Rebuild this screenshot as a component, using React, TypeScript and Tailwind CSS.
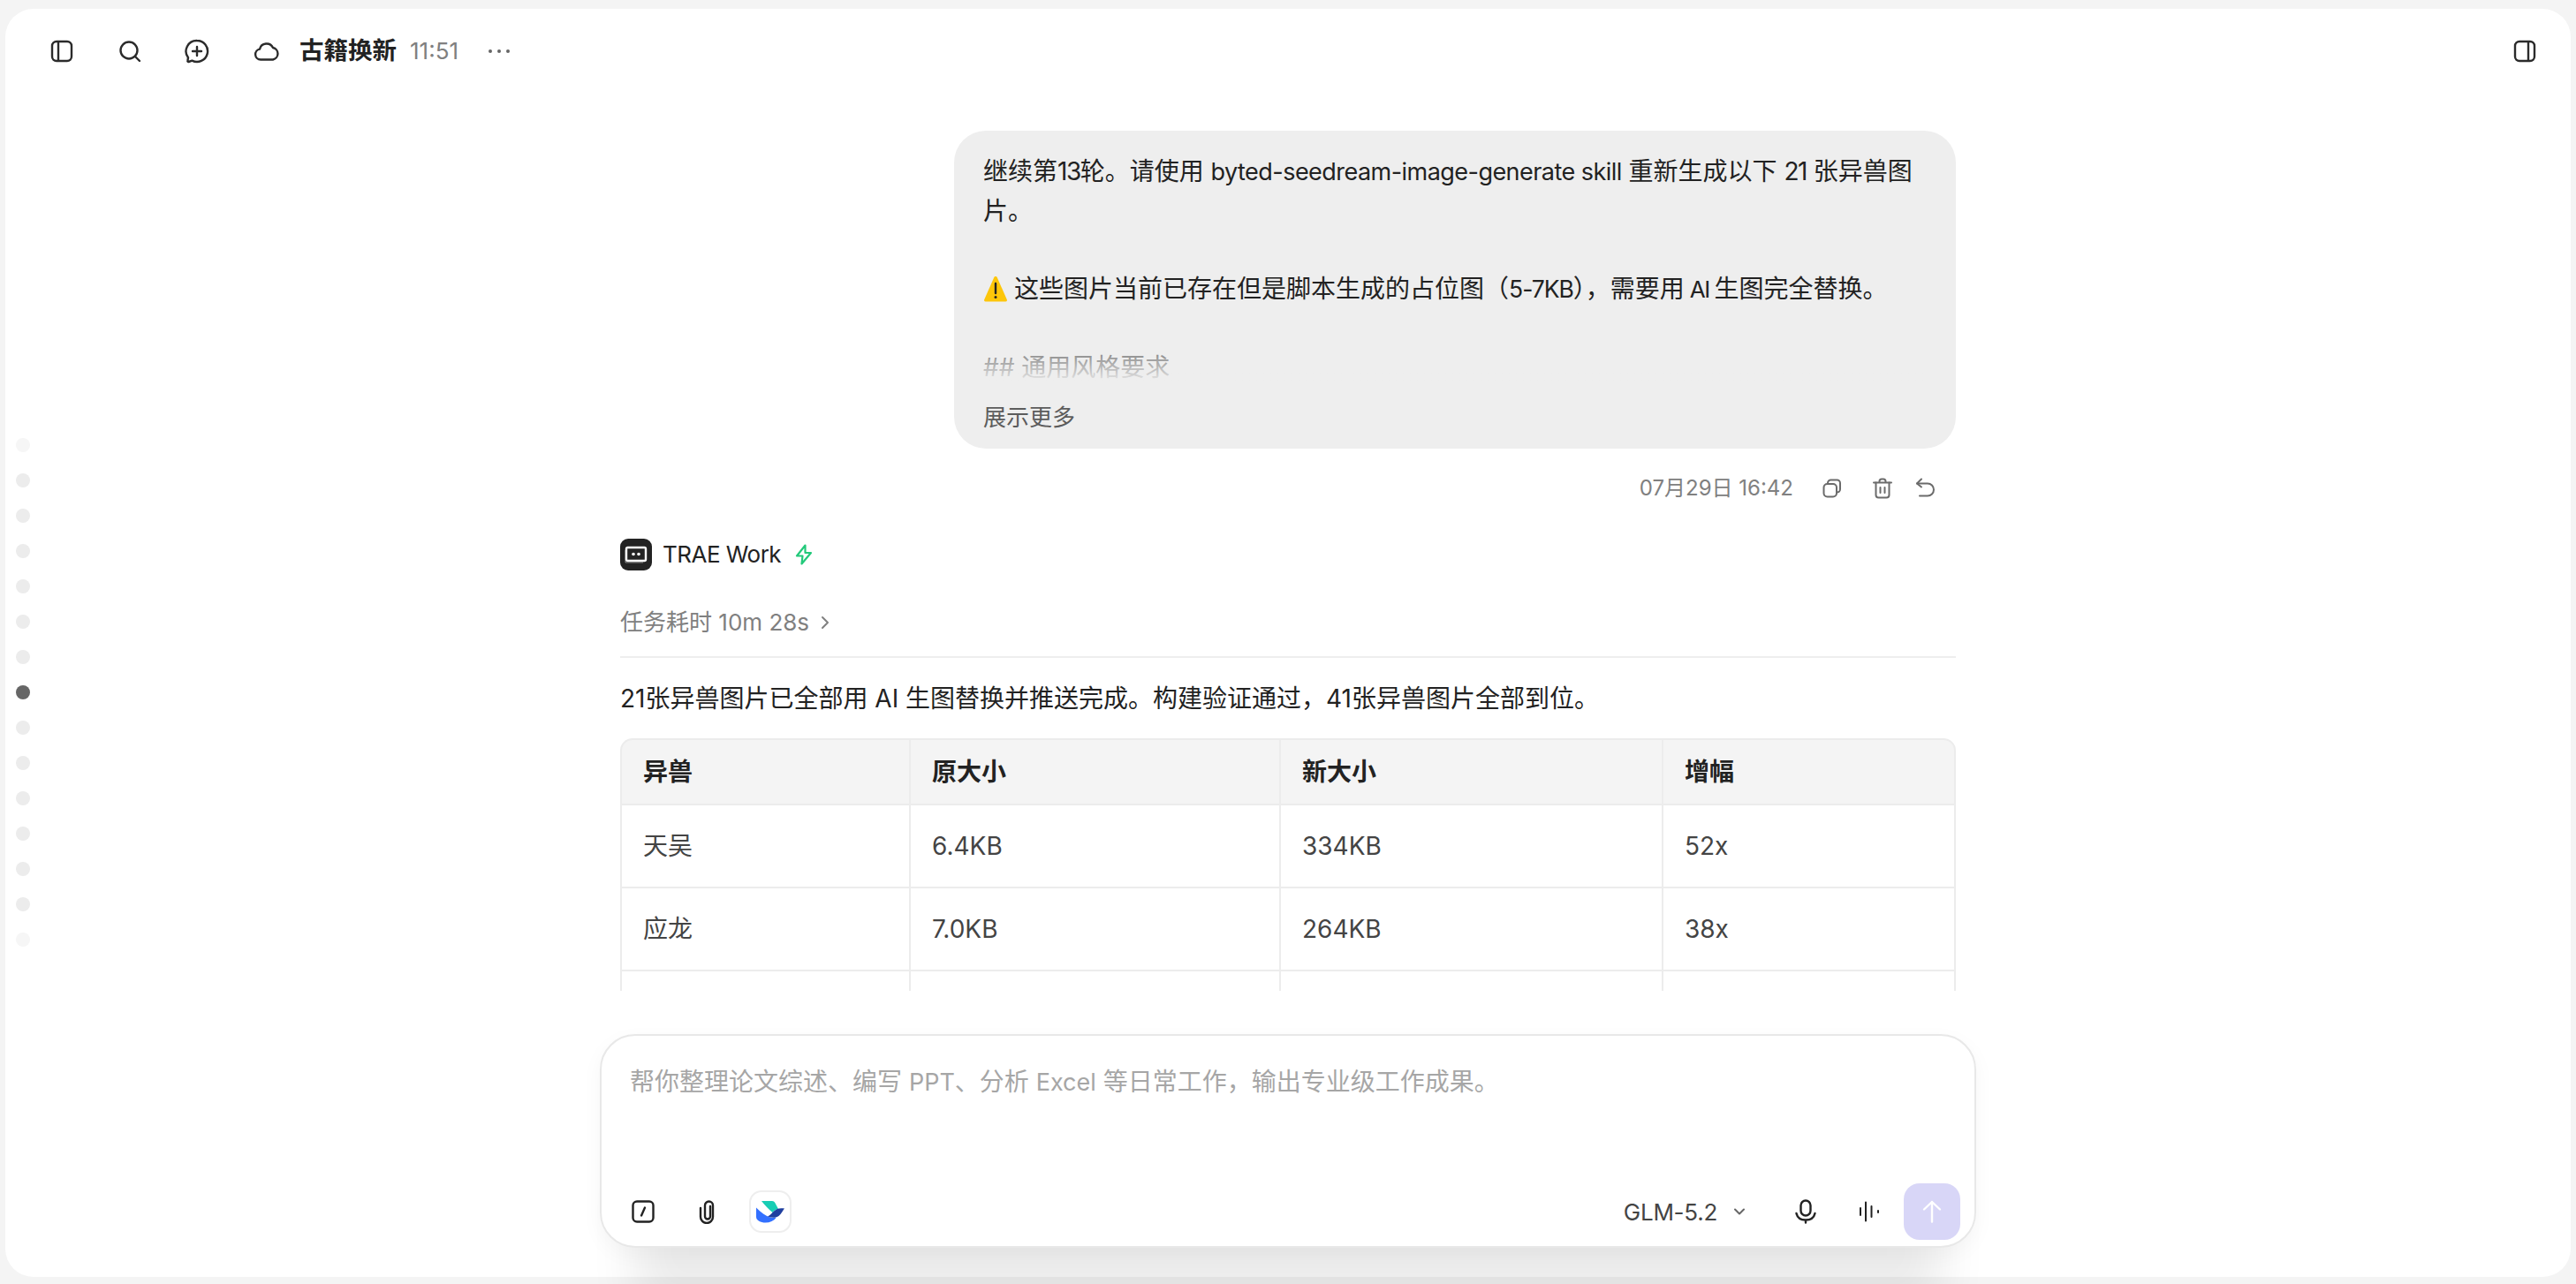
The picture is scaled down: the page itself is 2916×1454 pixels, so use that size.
import React from 'react';
import { ChevronDown, ChevronRight } from 'lucide-react';

const FONT = "font-['Inter','Noto_Sans_CJK_SC',sans-serif]";

const columns = [
  { label: '异兽', width: 'w-[327px]' },
  { label: '原大小', width: 'w-[419px]' },
  { label: '新大小', width: 'w-[433px]' },
  { label: '增幅', width: 'w-[333px]' },
];

const rows = [
  ['天吴', '6.4KB', '334KB', '52x'],
  ['应龙', '7.0KB', '264KB', '38x'],
  ['\u00a0', '', '', ''],
];

function SidebarIcon({ side }: { side: 'left' | 'right' }) {
  return (
    <svg width="26" height="26" viewBox="0 0 26 26" fill="none" stroke="#2b2b2b" strokeWidth="2.4">
      <rect x="2" y="2" width="22" height="22" rx="5" />
      <path d={side === 'left' ? 'M9 2v22' : 'M17 2v22'} />
    </svg>
  );
}

function SearchIcon() {
  return (
    <svg width="26" height="26" viewBox="0 0 26 26" fill="none" stroke="#2b2b2b" strokeWidth="2.4" strokeLinecap="round">
      <circle cx="12" cy="12" r="9.5" />
      <path d="M19 19l5 5" />
    </svg>
  );
}

function ChatPlusIcon() {
  return (
    <svg width="28" height="28" viewBox="0 0 28 28" fill="none" stroke="#2b2b2b" strokeWidth="2.4" strokeLinecap="round" strokeLinejoin="round">
      <path d="M14 2a12 12 0 1 1-5.6 22.6L4.6 26c-.8.2-1.4-.4-1.2-1.2l.6-3.6A12 12 0 0 1 14 2z" />
      <path d="M14 9v10M9 14h10" />
    </svg>
  );
}

function CloudIcon() {
  return (
    <svg width="30" height="24" viewBox="0 0 30 24" fill="none" stroke="#2b2b2b" strokeWidth="2.4" strokeLinejoin="round">
      <path d="M8 21.5a6 6 0 0 1-1-11.9A8 8 0 0 1 22 8a6.9 6.9 0 0 1 0 13.5z" />
    </svg>
  );
}

function CopyIcon() {
  return (
    <svg width="22" height="22" viewBox="0 0 22 22" fill="none" stroke="#6b6b6b" strokeWidth="2" strokeLinejoin="round">
      <rect x="1.5" y="6" width="14.5" height="14.5" rx="4" />
      <path d="M6 6V5a3.5 3.5 0 0 1 3.5-3.5h7A3.5 3.5 0 0 1 20 5v7a3.5 3.5 0 0 1-3.5 3.5H16" />
    </svg>
  );
}

function TrashIcon() {
  return (
    <svg width="22" height="24" viewBox="0 0 22 24" fill="none" stroke="#6b6b6b" strokeWidth="2" strokeLinecap="round" strokeLinejoin="round">
      <path d="M1 5.5h20M7.5 5.5V4A2.5 2.5 0 0 1 10 1.5h2A2.5 2.5 0 0 1 14.5 4v1.5" />
      <path d="M3.5 5.5v14a3 3 0 0 0 3 3h9a3 3 0 0 0 3-3v-14" />
      <path d="M8.5 11v6M13.5 11v6" />
    </svg>
  );
}

function UndoIcon() {
  return (
    <svg width="22" height="24" viewBox="0 0 22 24" fill="none" stroke="#6b6b6b" strokeWidth="2" strokeLinecap="round" strokeLinejoin="round">
      <path d="M7 1.5L2 6.5l5 4" />
      <path d="M2 6.5h12a6.5 6.5 0 0 1 0 14H5" />
    </svg>
  );
}

function WarningIcon() {
  return (
    <svg width="28" height="32" viewBox="0 0 28 32" className="inline-block align-[-6px] mr-[7px]">
      <path d="M14 2c.8 0 1.4.4 1.8 1.3l11 25c.5 1.200-.1 2.200-1.400 2.200H2.600c-1.300 0-1.900-1-1.400-2.200l11-25C12.600 2.400 13.200 2 14 2z" fill="#fdc60a" />
      <path d="M14 10v11" stroke="#222" strokeWidth="2.4" strokeLinecap="round" />
      <circle cx="14" cy="25.5" r="1.5" fill="#222" />
    </svg>
  );
}

function TraeLogo() {
  return (
    <div className="w-9 h-9 rounded-[9px] bg-[#232323] flex items-center justify-center">
      <svg width="26" height="20" viewBox="0 0 26 20" fill="none">
        <rect x="2" y="2" width="22" height="15" rx="1.5" stroke="#fff" strokeWidth="2.4" />
        <path d="M1 5v14h20" stroke="#fff" strokeWidth="0.8" opacity="0.6" />
        <circle cx="10" cy="9.5" r="1.8" fill="#fff" />
        <circle cx="16" cy="9.5" r="1.8" fill="#fff" />
      </svg>
    </div>
  );
}

function BoltIcon() {
  return (
    <svg width="20" height="24" viewBox="0 0 20 24" fill="none" stroke="#22c97a" strokeWidth="2.2" strokeLinejoin="round">
      <path d="M11.5 1.5L2 13.5h6.5L7.5 22.5 18 10h-6.500z" />
    </svg>
  );
}

function SlashIcon() {
  return (
    <svg width="26" height="26" viewBox="0 0 26 26" fill="none" stroke="#222" strokeWidth="2.4" strokeLinecap="round">
      <rect x="1.5" y="1.5" width="23" height="23" rx="4.5" />
      <path d="M15 8.5l-4 9" />
    </svg>
  );
}

function ClipIcon() {
  return (
    <svg width="20" height="27" viewBox="0 0 20 27" fill="none" stroke="#222" strokeWidth="2.4" strokeLinecap="round">
      <path d="M13 7v11.5a3 3 0 0 1-6 0V6a4.5 4.5 0 0 1 9 0v13a7 7 0 0 1-14 0V9" />
    </svg>
  );
}

function LarkLogo() {
  return (
    <svg width="32" height="26" viewBox="0 0 32 26">
      <path d="M6 1h12c1.5 0 2.6.7 3.3 2L25 10c-3 .5-5 2-6.5 4C14.5 10.500 9.500 5.500 6 1z" fill="#18cdb4" />
      <path d="M0 8.5C5 14 11 18 16 19.500c2.500.8 5 .8 7 0-3 4-7.500 6-12.500 6C5 25.500 0 23 0 19z" fill="#3370ff" />
      <path d="M13 18.500c3-1.500 5-4 7-6 3-3 7-4 12-3-2 2.500-3.500 6-6.500 8.500-3.500 2.500-8 2-12.500.5z" fill="#1f3f9f" />
    </svg>
  );
}

function MicIcon() {
  return (
    <svg width="24" height="28" viewBox="0 0 24 28" fill="none" stroke="#222" strokeWidth="2.4" strokeLinecap="round">
      <rect x="6.5" y="1.5" width="11" height="17" rx="5.5" />
      <path d="M1.5 16c1 4.5 5 7.5 10.5 7.5s9.500-3 10.500-7.500M12 23.500v3" />
    </svg>
  );
}

function WaveIcon() {
  return (
    <svg width="24" height="24" viewBox="0 0 24 24" fill="none" stroke="#222" strokeWidth="2" strokeLinecap="round">
      <path d="M2 8v8M8 1.5v21M14.5 6v12M22 11v2" />
    </svg>
  );
}

function SendIcon() {
  return (
    <svg width="22" height="26" viewBox="0 0 22 26" fill="none" stroke="#fff" strokeWidth="2.4" strokeLinecap="round" strokeLinejoin="round">
      <path d="M11 24.5V2M2 10.5L11 2l9 8.5" />
    </svg>
  );
}

export default function App() {
  return (
    <div className={`${FONT} h-screen bg-[#f4f4f4] pt-[10px] pl-[6px] pr-[6px] pb-[8px] text-[28px] text-[#222]`}>
      <div className="relative h-full bg-white rounded-[32px] flex flex-col">
        {/* Top bar */}
        <div className="h-[96px] flex-shrink-0 flex items-center pl-[51px] pr-[39px]">
          <SidebarIcon side="left" />
          <div className="ml-[51px]"><SearchIcon /></div>
          <div className="ml-[49px]"><ChatPlusIcon /></div>
          <div className="ml-[50px]"><CloudIcon /></div>
          <span className="ml-[22px] font-semibold leading-none text-[27.5px]">古籍换新</span>
          <span className="ml-[15px] text-[26px] text-[#808080] leading-none">11:51</span>
          <div className="ml-[34px] flex gap-[6px]">
            <span className="w-1 h-1 rounded-full bg-[#666]" />
            <span className="w-1 h-1 rounded-full bg-[#666]" />
            <span className="w-1 h-1 rounded-full bg-[#666]" />
          </div>
          <div className="ml-auto"><SidebarIcon side="right" /></div>
        </div>

        {/* Progress dots */}
        <div className="absolute left-[12px] top-[486px] flex flex-col gap-6">
          {Array.from({ length: 15 }).map((_, i) => (
            <span
              key={i}
              className={`w-4 h-4 rounded-full ${i === 7 ? 'bg-[#666]' : i === 0 || i === 14 ? 'bg-[#f6f6f6]' : 'bg-[#ececec]'}`}
            />
          ))}
        </div>

        {/* Conversation */}
        <div className="flex-1 min-h-0 overflow-hidden pt-[42px]">
          <div className="w-[1512px] mx-auto">
            <div className="flex justify-end">
              <div className="w-[1134px] h-[360px] bg-[#eeeeee] rounded-[36px] pl-[33px] pr-[32px] pt-[24px]">
                <div className="relative h-[263px] overflow-hidden leading-[44px]">
                  <p>
                    继续第<span className="tracking-[-1.5px]">13</span>轮。请使用 <span className="text-[27px] tracking-[-0.02em]">byted-seedream-image-generate skill</span> 重新生成以下 <span className="tracking-[-1.5px]">21</span> 张异兽图
                    <br />
                    片。
                  </p>
                  <p className="mt-[44px]">
                    <WarningIcon />
                    这些图片当前已存在但是脚本生成的占位图（<span className="text-[26.5px] tracking-[-1px]">5-7KB</span>），需要用<span className="text-[26px] tracking-[-1.5px]"> AI </span>生图完全替换。
                  </p>
                  <p className="mt-[44px] text-[#8f8f8f]">## 通用风格要求</p>
                  <div className="absolute left-0 right-0 bottom-0 h-[34px] bg-gradient-to-b from-[#eeeeee00] to-[#eeeeee]" />
                </div>
                <div className="mt-[16px] text-[26px] text-[#5c5c5c] leading-[44px]">展示更多</div>
              </div>
            </div>

            <div className="flex items-center justify-end mt-[30px] h-[30px] pr-[24px] text-[24px] text-[#808080]">
              <span>07月29日 16:42</span>
              <div className="ml-[33px]"><CopyIcon /></div>
              <div className="ml-[35px]"><TrashIcon /></div>
              <div className="ml-[26px]"><UndoIcon /></div>
            </div>

            <div className="flex items-center mt-[40px]">
              <TraeLogo />
              <span className="ml-3 text-[26px] tracking-[-0.02em]">TRAE Work</span>
              <div className="ml-4"><BoltIcon /></div>
            </div>

            <div className="flex items-center mt-[39px] text-[26px] text-[#808080] leading-[38px]">
              <span>任务耗时 10m 28s</span>
              <ChevronRight className="ml-[6px] w-[24px] h-[24px]" strokeWidth={2} />
            </div>

            <div className="mt-[19px] h-[2px] bg-[#eeeeee]" />

            <p className="mt-[24px] leading-[44px]">21张异兽图片已全部用 AI 生图替换并推送完成。构建验证通过，41张异兽图片全部到位。</p>

            <table className="mt-[23px] w-[1512px] table-fixed border-separate border-spacing-0 rounded-t-[14px]">
              <thead>
                <tr>
                  {columns.map((col, i) => (
                    <th
                      key={col.label}
                      className={`${col.width} h-[76px] bg-[#f4f4f4] border-y-2 border-[#ececec] text-left font-semibold pl-[24px] ${i === 0 ? 'border-l-2 rounded-tl-[14px]' : 'border-l-2'} ${i === 3 ? 'border-r-2 rounded-tr-[14px]' : ''}`}
                    >
                      {col.label}
                    </th>
                  ))}
                </tr>
              </thead>
              <tbody>
                {rows.map((row, r) => (
                  <tr key={r}>
                    {row.map((cell, i) => (
                      <td
                        key={i}
                        className={`h-[94px] border-b-2 border-l-2 border-[#ececec] pl-[24px] text-[#444] ${i === 3 ? 'border-r-2' : ''}`}
                      >
                        {cell}
                      </td>
                    ))}
                  </tr>
                ))}
              </tbody>
            </table>
          </div>
        </div>

        {/* Composer */}
        <div className="flex-shrink-0 mt-[49px] mb-[33px] mx-auto w-[1558px] h-[242px] bg-white border-2 border-[#e8e8e8] rounded-[40px] shadow-[0_110px_50px_-40px_rgba(0,0,0,0.08),0_8px_24px_rgba(0,0,0,0.04)] flex flex-col pl-[32px] pr-[16px]">
          <div className="pt-[30px] text-[#a6a6a6] leading-[44px]">
            帮你整理论文综述、编写 <span className="text-[27px]">PPT</span>、分析 <span className="text-[27px]">Excel</span> 等日常工作，输出专业级工作成果。
          </div>
          <div className="mt-auto mb-[7px] flex items-center h-[64px]">
            <div className="ml-[2px]"><SlashIcon /></div>
            <div className="ml-[50px]"><ClipIcon /></div>
            <div className="ml-[37px] w-12 h-12 rounded-[14px] border-2 border-[#eeeeee] flex items-center justify-center">
              <LarkLogo />
            </div>
            <span className="ml-auto text-[26px] tracking-[-0.01em] text-[#444]">GLM-5.2</span>
            <ChevronDown className="ml-[15px] w-[20px] h-[20px] text-[#666]" strokeWidth={2.4} />
            <div className="ml-[53px]"><MicIcon /></div>
            <div className="ml-[48px]"><WaveIcon /></div>
            <div className="ml-[27px] w-16 h-16 rounded-[18px] bg-[#d8d6f7] flex items-center justify-center">
              <SendIcon />
            </div>
          </div>
        </div>
      </div>
    </div>
  );
}
